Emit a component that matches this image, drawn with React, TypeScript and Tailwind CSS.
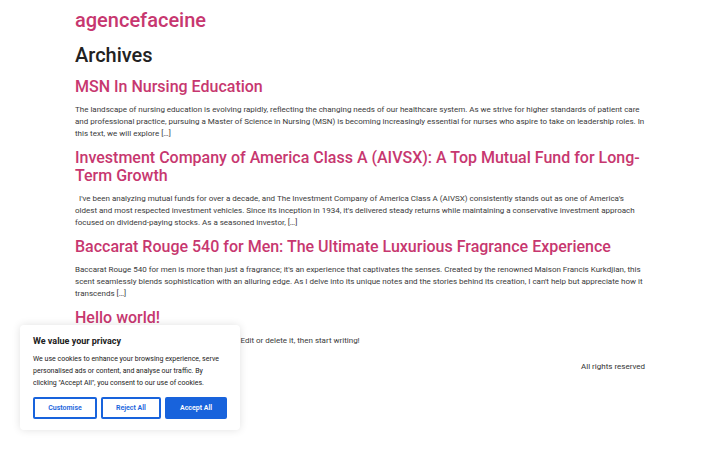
const posts = [
  {
    title: "MSN In Nursing Education",
    excerpt:
      "The landscape of nursing education is evolving rapidly, reflecting the changing needs of our healthcare system. As we strive for higher standards of patient care and professional practice, pursuing a Master of Science in Nursing (MSN) is becoming increasingly essential for nurses who aspire to take on leadership roles. In this text, we will explore […]",
  },
  {
    title: "Investment Company of America Class A (AIVSX): A Top Mutual Fund for Long-Term Growth",
    excerpt:
      "\u00a0 I've been analyzing mutual funds for over a decade, and The Investment Company of America Class A (AIVSX) consistently stands out as one of America's oldest and most respected investment vehicles. Since its inception in 1934, it's delivered steady returns while maintaining a conservative investment approach focused on dividend-paying stocks. As a seasoned investor, […]",
  },
  {
    title: "Baccarat Rouge 540 for Men: The Ultimate Luxurious Fragrance Experience",
    excerpt:
      "Baccarat Rouge 540 for men is more than just a fragrance; it's an experience that captivates the senses. Created by the renowned Maison Francis Kurkdjian, this scent seamlessly blends sophistication with an alluring edge. As I delve into its unique notes and the stories behind its creation, I can't help but appreciate how it transcends […]",
  },
  {
    title: "Hello world!",
    excerpt: "Welcome to WordPress. This is your first post. Edit or delete it, then start writing!",
  },
];

const CookieBanner: React.FC = () => {
  return (
    <div className="absolute left-[20px] top-[325px] w-[220px] bg-white rounded-[4px] shadow-[0_0_8px_rgba(0,0,0,0.12)] px-[13px] pt-[9px] pb-[11px]">
      <div className="text-[9px] leading-[14px] font-bold text-[#212121]">We value your privacy</div>
      <p className="mt-[5px] text-[7px] leading-[12px] text-[#212121]">
        We use cookies to enhance your browsing experience, serve personalised ads or content, and analyse our traffic. By
        clicking "Accept All", you consent to our use of cookies.
      </p>
      <div className="mt-[8px] flex gap-[4px]">
        <button className="w-[64px] h-[22px] border-2 border-[#1863dc] rounded-[2px] text-[7px] font-semibold text-[#1863dc] bg-white">
          Customise
        </button>
        <button className="w-[60px] h-[22px] border-2 border-[#1863dc] rounded-[2px] text-[7px] font-semibold text-[#1863dc] bg-white">
          Reject All
        </button>
        <button className="w-[62px] h-[22px] border-2 border-[#1863dc] rounded-[2px] text-[7px] font-semibold text-white bg-[#1863dc]">
          Accept All
        </button>
      </div>
    </div>
  );
};

const App: React.FC = () => {
  return (
    <div className="relative w-[720px] h-[450px] bg-white overflow-hidden font-['Roboto',sans-serif]">
      <div className="w-[570px] mx-auto pt-[7px]">
        <div className="text-[20px] leading-[26px] font-medium text-[#c7376f]">agencefaceine</div>
        <h1 className="mt-[10px] text-[20px] leading-[24px] font-medium text-[#222]">Archives</h1>
        {posts.map((post, i) => (
          <div key={post.title} className={i === 0 ? "mt-[11px]" : "mt-[9px]"}>
            <h2 className="text-[16px] leading-[18px] font-medium text-[#c7376f]">{post.title}</h2>
            <p className="mt-[8px] text-[8px] leading-[12px] text-[#3a3a3a]">{post.excerpt}</p>
          </div>
        ))}
        <div className="mt-[14px] flex justify-end text-[8px] leading-[12px] text-[#333]">All rights reserved</div>
      </div>
      <CookieBanner />
    </div>
  );
};

export default App;
